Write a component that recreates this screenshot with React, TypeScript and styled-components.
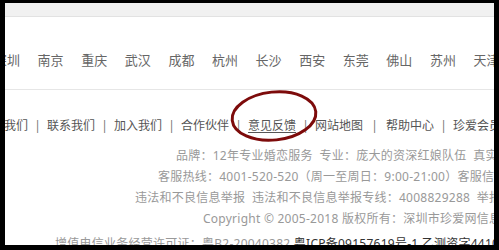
import React from 'react';
import styled, { createGlobalStyle } from 'styled-components';

const GlobalStyle = createGlobalStyle`
  body {
    margin: 0;
    overflow: hidden;
    background: #fff;
    font-family: "Noto Sans", "Noto Sans CJK SC", sans-serif;
  }
`;

const Frame = styled.div`
  position: relative;
  width: 499px;
  height: 250px;
  box-sizing: border-box;
  border-style: solid;
  border-color: #000;
  border-width: 3px 5px 5px 5px;
  overflow: hidden;
  background: #fff;
`;

const TopBand = styled.div`
  height: 13px;
  background: #f1f1f1;
  border-bottom: 1px solid #e2e2e2;
`;

const CityRow = styled.div`
  display: flex;
  align-items: center;
  height: 73px;
  padding-top: 13px;
  box-sizing: border-box;
  margin-left: -11px;
  white-space: nowrap;
  border-bottom: 1px solid #e6e6e6;
`;

const City = styled.span`
  flex: none;
  width: 43.6px;
  font-size: 13px;
  line-height: 20px;
  color: #666;
`;

const LinkRow = styled.div`
  display: flex;
  align-items: center;
  margin: 25px 0 0 -25px;
  height: 20px;
  white-space: nowrap;
  font-size: 12px;
  color: #555;
`;

const FooterLink = styled.span<{ underline?: boolean }>`
  flex: none;
  text-decoration: ${({ underline }) => (underline ? 'underline' : 'none')};
  text-underline-offset: 2px;
`;

const Sep = styled.span<{ wide?: boolean }>`
  flex: none;
  width: ${({ wide }) => (wide ? '23px' : '19px')};
  text-align: center;
  color: #777;
`;

const InfoBlock = styled.div`
  margin-top: 10px;
  font-size: 12px;
  line-height: 21px;
  letter-spacing: 0.25px;
  color: #999;
  white-space: nowrap;
`;

const InfoLine = styled.div<{ indent: number; gap?: number }>`
  padding-left: ${({ indent }) => indent}px;
  margin-top: ${({ gap }) => gap ?? 0}px;
`;

const Dark = styled.span`
  color: #333;
`;

const Mark = styled.svg`
  position: absolute;
  left: 222px;
  top: 84px;
  width: 94px;
  height: 58px;
  overflow: visible;
`;

const cities = ['深圳', '南京', '重庆', '武汉', '成都', '杭州', '长沙', '西安', '东莞', '佛山', '苏州', '天津', '厦门'];

const links = ['关于我们', '联系我们', '加入我们', '合作伙伴', '意见反馈', '网站地图', '帮助中心', '珍爱会员'];

export default function App() {
  return (
    <>
      <GlobalStyle />
      <Frame>
        <TopBand />
        <CityRow>
          {cities.map((c) => (
            <City key={c}>{c}</City>
          ))}
        </CityRow>
        <LinkRow>
          {links.map((l, i) => (
            <React.Fragment key={l}>
              {i > 0 && <Sep wide={l === '帮助中心'}>|</Sep>}
              <FooterLink underline={l === '意见反馈'}>{l}</FooterLink>
            </React.Fragment>
          ))}
        </LinkRow>
        <InfoBlock>
          <InfoLine indent={171}>
            品牌：12年专业婚恋服务&nbsp;&nbsp;专业：庞大的资深红娘队伍&nbsp;&nbsp;真实：实名认证
          </InfoLine>
          <InfoLine indent={153}>
            客服热线：4001-520-520（周一至周日：9:00-21:00）客服信箱：vip@zhenai.com
          </InfoLine>
          <InfoLine indent={130}>
            违法和不良信息举报&nbsp;&nbsp;违法和不良信息举报专线：4008829288&nbsp;&nbsp;举报邮箱
          </InfoLine>
          <InfoLine indent={198}>Copyright © 2005-2018 版权所有：深圳市珍爱网信息技术有限公司</InfoLine>
          <InfoLine indent={50} gap={4}>
            增值电信业务经营许可证：粤B2-20040382 <Dark>粤ICP备09157619号-1 乙测资字44100000</Dark>
          </InfoLine>
        </InfoBlock>
        <Mark viewBox="0 0 94 58">
          <ellipse
            cx="47"
            cy="29"
            rx="42"
            ry="24"
            transform="rotate(-6 47 29)"
            fill="none"
            stroke="#7d0b0b"
            strokeWidth="3"
          />
        </Mark>
      </Frame>
    </>
  );
}
